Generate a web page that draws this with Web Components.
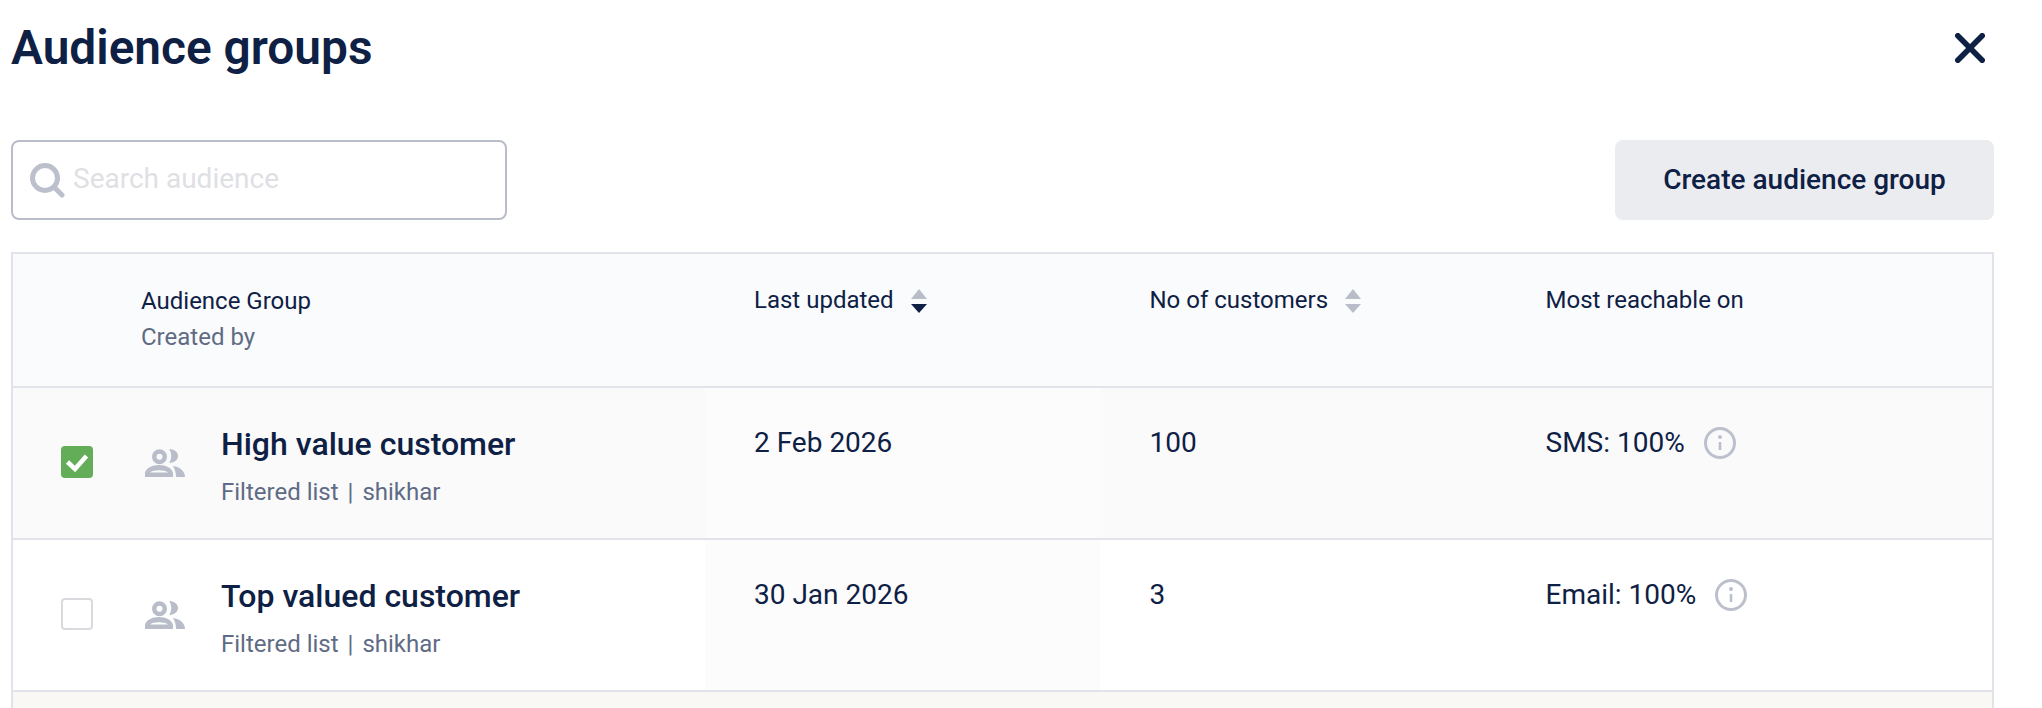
<!DOCTYPE html>
<html lang="en">
<head>
<meta charset="utf-8">
<title>Audience groups</title>
<style>
    html, body { margin: 0; background: #fff; }
    body { height: 708px; overflow: hidden; font-family: Roboto, "Liberation Sans", sans-serif; color: #0e2044; }
</style>
</head>
<body>
<audience-panel>
    <span slot="title">Audience groups</span>
    <search-box slot="search" placeholder="Search audience"></search-box>
    <span slot="action">Create audience group</span>
    <audience-table>
        <table-head></table-head>
        <audience-row checked name="High value customer" date="2 Feb 2026" count="100" reach="SMS: 100%"></audience-row>
        <audience-row name="Top valued customer" date="30 Jan 2026" count="3" reach="Email: 100%"></audience-row>
    </audience-table>
</audience-panel>

<script>
class AudiencePanel extends HTMLElement {
    constructor() {
        super();
        this.attachShadow({ mode: 'open' });
        this.shadowRoot.innerHTML = `
            <style>
                :host { display: block; padding: 0 48px 0 11px; }
                .top { display: flex; justify-content: space-between; align-items: center; height: 96px; }
                h1 { margin: 0; font-size: 47.8px; line-height: 96px; font-weight: 600; color: #0e2044; }
                .close { display: block; width: 30px; height: 30px; margin-right: 9px; }
                .bar { display: flex; justify-content: space-between; margin: 44px 0 32px; height: 80px; }
                .btn {
                    display: flex; align-items: center; justify-content: center;
                    width: 379px; padding-bottom: 2px; box-sizing: border-box;
                    border-radius: 8px; background: #ebecf0;
                    font-size: 28px; font-weight: 500; color: #0e2044;
                }
            </style>
            <div class="top">
                <h1><slot name="title"></slot></h1>
                <svg class="close" viewBox="0 0 30 30" fill="none" stroke="#0e2044" stroke-width="5.6" stroke-linecap="round">
                    <path d="M2.8 2.8 27.2 27.2M27.2 2.8 2.8 27.2"/>
                </svg>
            </div>
            <div class="bar">
                <slot name="search"></slot>
                <div class="btn"><slot name="action"></slot></div>
            </div>
            <slot></slot>
        `;
    }
}

class SearchBox extends HTMLElement {
    constructor() {
        super();
        this.attachShadow({ mode: 'open' });
        this.shadowRoot.innerHTML = `
            <style>
                :host { display: flex; align-items: center; box-sizing: border-box; width: 496px; height: 80px;
                    border: 2px solid #b9bdca; border-radius: 8px; padding-left: 16px; background: #fff; }
                svg { display: block; width: 36px; height: 36px; flex: none; margin-left: -0.5px; }
                span { margin: 0 0 4px 8.5px; font-size: 28px; color: #dfe0e4; }
            </style>
            <svg viewBox="0 0 36 36" fill="none" stroke="#bcc0cc">
                <circle cx="16" cy="16" r="12.5" stroke-width="5"/>
                <path d="M26 26 33 33" stroke-width="5" stroke-linecap="round"/>
            </svg>
            <span>${this.getAttribute('placeholder')}</span>
        `;
    }
}

class AudienceTable extends HTMLElement {
    constructor() {
        super();
        this.attachShadow({ mode: 'open' });
        this.shadowRoot.innerHTML = `
            <style>
                :host { display: block; border: 2px solid #e2e3ea; border-bottom: 0; background: #faf8f5; min-height: 456px; }
            </style>
            <slot></slot>
        `;
    }
}

class SortArrows extends HTMLElement {
    constructor() {
        super();
        this.attachShadow({ mode: 'open' });
        const down = this.hasAttribute('active') ? '#0e2044' : '#b9bdca';
        this.shadowRoot.innerHTML = `
            <style>
                :host { display: inline-block; width: 16px; height: 24px; margin-left: 17px; }
                svg { display: block; width: 16px; height: 24px; }
            </style>
            <svg viewBox="0 0 16 24">
                <path d="M8 0 16 10H0Z" fill="#b9bdca"/>
                <path d="M0 15H16L8 24Z" fill="${down}"/>
            </svg>
        `;
    }
}

class TableHead extends HTMLElement {
    constructor() {
        super();
        this.attachShadow({ mode: 'open' });
        this.shadowRoot.innerHTML = `
            <style>
                :host {
                    display: grid; grid-template-columns: 692px 395px 396px 1fr;
                    height: 134px; box-sizing: border-box; background: #fafbfd;
                    border-bottom: 2px solid #e2e3ea;
                    font-size: 24px; line-height: 36px; color: #0e2044;
                }
                .first { padding: 29px 0 0 128px; }
                .first div + div { color: #5f6b84; }
                .col { display: flex; align-items: flex-start; padding: 28px 0 0 49.5px; }
                .col.date { padding-left: 49px; }
                sort-arrows { margin-top: 7px; }
            </style>
            <div class="first"><div>Audience Group</div><div>Created by</div></div>
            <div class="col date">Last updated<sort-arrows active></sort-arrows></div>
            <div class="col">No of customers<sort-arrows></sort-arrows></div>
            <div class="col">Most reachable on</div>
        `;
    }
}

class AudienceRow extends HTMLElement {
    constructor() {
        super();
        this.attachShadow({ mode: 'open' });
        const checked = this.hasAttribute('checked');
        this.shadowRoot.innerHTML = `
            <style>
                :host {
                    display: grid; grid-template-columns: 692px 395px 396px 1fr;
                    height: 152px; box-sizing: border-box; border-bottom: 2px solid #e2e3ea;
                    background: ${checked ? '#fafafb' : '#fff'};
                    color: #0e2044;
                }
                .first { display: flex; align-items: flex-start; padding-left: 48px; }
                .box { box-sizing: border-box; width: 32px; height: 32px; margin-top: 58px; border-radius: 4px; border: 2px solid #d9dadd; background: #fff; flex: none; }
                .box.on { border: 0; background: #63ad58; }
                .box svg { display: block; width: 32px; height: 32px; }
                .people { display: block; width: 40px; height: 28px; margin: 61px 36px 0 52px; flex: none; }
                .name { font-size: 32px; font-weight: 500; line-height: 40px; margin-top: 36px; }
                .sub { font-size: 24px; line-height: 30px; margin-top: 13px; color: #5f6b84; display: flex; gap: 9px; }
                .cell { padding: 40px 0 0 49.5px; font-size: 28px; line-height: 30px; }
                .cell.date { background: #fcfcfd; padding-left: 49px; }
                .reach { display: flex; align-items: flex-start; }
                .info { display: block; width: 32px; height: 32px; margin: -1px 0 0 19px; flex: none; }
            </style>
            <div class="first">
                <div class="box ${checked ? 'on' : ''}">
                    ${checked ? '<svg viewBox="0 0 32 32" fill="none" stroke="#fff" stroke-width="4.6"><path d="M6.5 16 14 23 25.5 10"/></svg>' : ''}
                </div>
                <svg class="people" viewBox="0 0 40 28" fill="#b9bdca">
                    <circle cx="14.5" cy="7.7" r="5.25" fill="none" stroke="#b9bdca" stroke-width="4.5"/>
                    <path fill-rule="evenodd" d="M0 28V24C1 19 7 16 14 16S27 19 28 24V28ZM5 23.5C8 20.5 20 20.5 23 23.5Z"/>
                    <path d="M24 0C29 0 33 3 33 7S29 14 24 14C27 10 27 4 24 0Z"/>
                    <path d="M28 17C35 18 40 22 40 28H31C31 24 30 20 28 17Z"/>
                </svg>
                <div>
                    <div class="name">${this.getAttribute('name')}</div>
                    <div class="sub"><span>Filtered list</span><span>|</span><span>shikhar</span></div>
                </div>
            </div>
            <div class="cell date">${this.getAttribute('date')}</div>
            <div class="cell">${this.getAttribute('count')}</div>
            <div class="cell reach">
                <span>${this.getAttribute('reach')}</span>
                <svg class="info" viewBox="0 0 32 32" fill="none" stroke="#bcc0cc">
                    <circle cx="16" cy="16" r="14.5" stroke-width="3"/>
                    <circle cx="16" cy="10" r="2" fill="#bcc0cc" stroke="none"/>
                    <path d="M16 15V23" stroke-width="2.6"/>
                </svg>
            </div>
        `;
    }
}

customElements.define('audience-panel', AudiencePanel);
customElements.define('search-box', SearchBox);
customElements.define('audience-table', AudienceTable);
customElements.define('sort-arrows', SortArrows);
customElements.define('table-head', TableHead);
customElements.define('audience-row', AudienceRow);
</script>
</body>
</html>
